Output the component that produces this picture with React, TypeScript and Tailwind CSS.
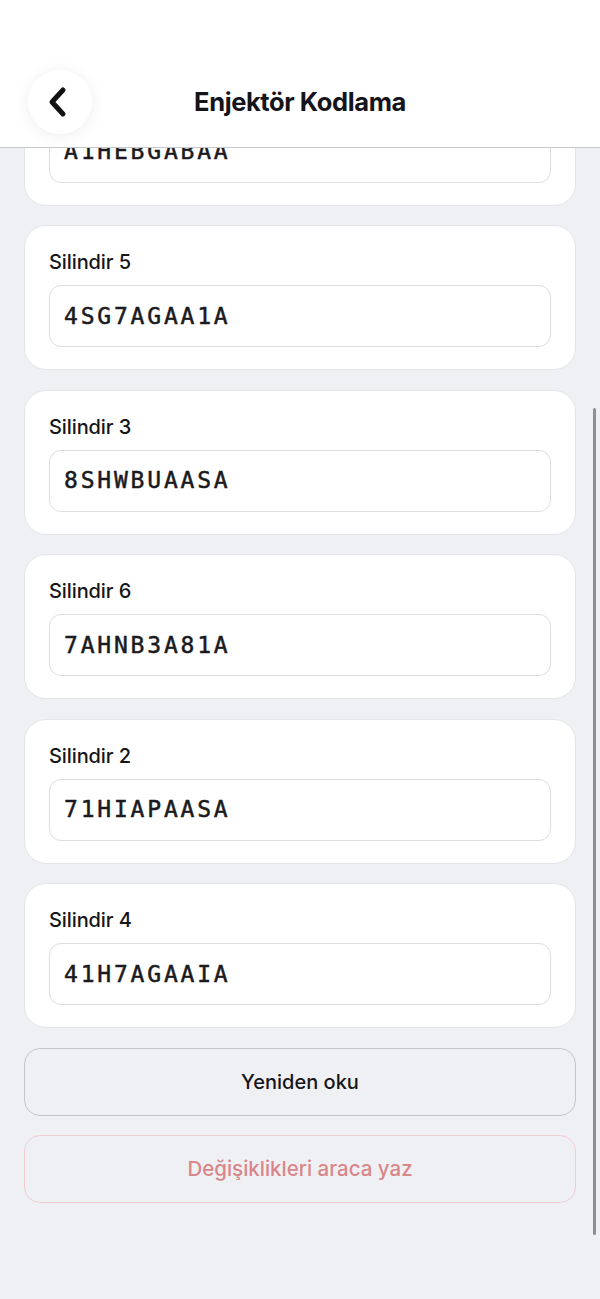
const CYLINDERS = [
  { label: 'Silindir 1', code: 'A1HEBGABAA' },
  { label: 'Silindir 5', code: '4SG7AGAA1A' },
  { label: 'Silindir 3', code: '8SHWBUAASA' },
  { label: 'Silindir 6', code: '7AHNB3A81A' },
  { label: 'Silindir 2', code: '71HIAPAASA' },
  { label: 'Silindir 4', code: '41H7AGAAIA' },
];

function CylinderCard({ label, code }: { label: string; code: string }) {
  return (
    <div className="bg-white border border-[#e4e5ea] rounded-[22px] px-6 pt-6 pb-6 h-[145px] shrink-0">
      <div className="text-[20px] leading-[24px] font-medium text-[#16161a] tracking-[-0.1px]">{label}</div>
      <div className="mt-[11px] h-[62px] border border-[#dcdde2] rounded-[12px] flex items-center px-[14px]">
        <span className="font-['DejaVu_Sans_Mono',monospace] text-[23px] tracking-[2.8px] text-[#1a1a20] [-webkit-text-stroke:0.5px_#1a1a20]">
          {code}
        </span>
      </div>
    </div>
  );
}

export default function App() {
  return (
    <div className="relative w-[600px] h-[1299px] bg-[#eff0f4] flex flex-col overflow-hidden font-['Inter',sans-serif]">
      <header className="relative z-10 h-[148px] shrink-0 bg-white border-b border-[#c6c7cc] pt-[70px] px-7">
        <div className="relative h-16 flex items-center justify-center">
          <button className="absolute left-0 top-0 w-16 h-16 rounded-full bg-white shadow-[0_2px_16px_rgba(0,0,0,0.07)] flex items-center justify-center">
            <svg width="24" height="34" viewBox="0 0 24 34" fill="none" className="-ml-[5px]">
              <path d="M17 5 L6 17 L17 29" stroke="#111" strokeWidth="5" strokeLinecap="round" strokeLinejoin="round" />
            </svg>
          </button>
          <h1 className="text-[25.5px] font-bold text-[#14141a] tracking-[-0.4px]">Enjektör Kodlama</h1>
        </div>
      </header>

      <main className="flex-1 overflow-hidden px-6">
        <div className="-mt-[87.5px] flex flex-col gap-[19.5px]">
          {CYLINDERS.map(c => (
            <CylinderCard key={c.label} label={c.label} code={c.code} />
          ))}
          <button className="h-[68px] rounded-[16px] border border-[#c5c6cc] text-[20px] font-medium text-[#16161a]">
            Yeniden oku
          </button>
          <button className="h-[68px] rounded-[16px] border border-[#f0cdd1] text-[20.5px] font-medium text-[#d9868a]">
            Değişiklikleri araca yaz
          </button>
        </div>
      </main>

      <div className="absolute right-[4px] top-[408px] w-[3px] h-[827px] rounded-full bg-[#8e8e93]" />
    </div>
  );
}
